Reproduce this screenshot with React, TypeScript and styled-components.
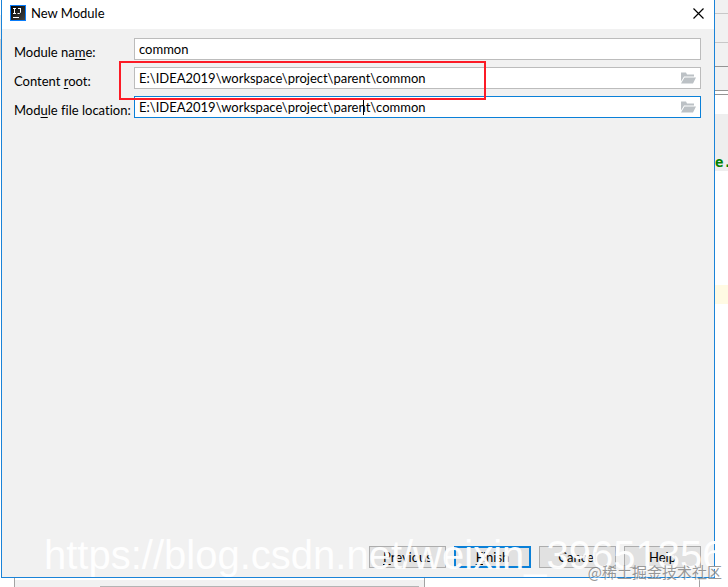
import React from "react";
import styled, { createGlobalStyle } from "styled-components";

const GlobalStyle = createGlobalStyle`
  *, *::before, *::after { box-sizing: border-box; }
  body { margin: 0; overflow: hidden; background: #fff; }
  body, input, button { font-family: Lato, "Noto Sans", sans-serif; font-size: 13px; color: #000; font-variant-ligatures: none; }
  u { text-underline-offset: 2px; text-decoration-thickness: 1px; }
`;

const Desktop = styled.div`
  position: relative;
  display: grid;
  grid-template-columns: 1px minmax(0, 1fr) 13px;
  grid-template-rows: minmax(0, 1fr) 9px;
  height: 100vh;
  overflow: hidden;
`;

const Strip = styled.div`
  display: flex;
  flex-direction: column;
  overflow: hidden;
`;

const Band = styled.div<{ $size: number; $fill: string; $rule?: string }>`
  display: flex;
  align-items: flex-end;
  flex: none;
  height: ${(p) => p.$size}px;
  background: ${(p) => p.$fill};
  border-bottom: ${(p) => (p.$rule ? `1px solid ${p.$rule}` : "0")};
`;

const Code = styled.code`
  font: bold 14px/18px "DejaVu Sans Mono", monospace;
  color: #008000;
`;

const Dialog = styled.section`
  display: flex;
  flex-direction: column;
  background: #f1f1f1;
  border: solid #1a83d8;
  border-width: 0 1px 1px;
`;

const TitleBar = styled.header`
  display: flex;
  align-items: center;
  gap: 5px;
  height: 29px;
  padding: 0 8px 3px;
  background: #fff;
`;

const Logo = styled.svg`
  display: block;
  width: 16px;
  height: 16px;
`;

const Title = styled.h1`
  flex: 1;
  margin: 0;
  font-size: 13px;
  font-weight: 400;
`;

const CloseButton = styled.button`
  display: flex;
  padding: 2px;
  border: 0;
  background: none;
`;

const Form = styled.form`
  display: flex;
  flex: 1;
  flex-direction: column;
  padding: 9px 13px 9px 12px;
`;

const Fields = styled.div`
  position: relative;
  display: flex;
  flex: 1;
  flex-direction: column;
  gap: 7px;
`;

const Row = styled.div`
  display: grid;
  grid-template-columns: 120px minmax(0, 1fr);
`;

const Label = styled.label`
  height: 22px;
  padding-top: 5px;
  line-height: 18px;
  white-space: nowrap;
`;

const Field = styled.div<{ $active?: boolean }>`
  position: relative;
  display: flex;
  align-items: center;
  height: 22px;
  padding-right: 4px;
  background: #fff;
  border: 1px solid ${(p) => (p.$active ? "#0a80d8" : "#bcbcbc")};
`;

const TextInput = styled.input`
  flex: 1;
  min-width: 0;
  height: 20px;
  padding: 0 4px;
  border: 0;
  outline: 0;
  background: none;
`;

const Caret = styled.span`
  position: absolute;
  top: 3px;
  left: 228px;
  width: 1px;
  height: 15px;
  background: #000;
`;

const BrowseButton = styled.button`
  display: flex;
  padding: 0;
  border: 0;
  background: none;
`;

const Highlight = styled.div`
  position: absolute;
  top: 23px;
  left: 105px;
  width: 367px;
  height: 39px;
  border: 2px solid #fc1b26;
  pointer-events: none;
`;

const Actions = styled.footer`
  display: flex;
  justify-content: flex-end;
  gap: 8px;
`;

const ActionButton = styled.button<{ $primary?: boolean }>`
  width: 77px;
  height: 22px;
  padding: 0;
  line-height: 16px;
  background: #e1e1e1;
  border: ${(p) => (p.$primary ? "2px solid #0a80d8" : "1px solid #adadad")};
`;

const Below = styled.div`
  grid-column: 1 / -1;
  display: flex;
  padding: 0 28px 0 14px;
  justify-content: space-between;
`;

const BelowPanel = styled.div`
  display: flex;
  align-items: flex-end;
  width: 411px;
  padding: 0 5px 0 85px;
  background: linear-gradient(#fff 2px, #f1f1f1 2px);
  border: solid #a3a3a3;
  border-width: 0 1px;
`;

const Rule = styled.div`
  flex: 1;
  height: 1px;
  background: #b4b4b4;
`;

const Edge = styled.div`
  width: 1px;
  background: #a3a3a3;
`;

const BlogMark = styled.div`
  position: absolute;
  left: 44px;
  bottom: 8px;
  font: 40px/48px "Liberation Sans", Arial, sans-serif;
  color: rgba(255, 255, 255, 0.95);
  white-space: nowrap;
  pointer-events: none;
`;

const SiteMark = styled.div`
  position: absolute;
  right: 6px;
  bottom: 4px;
  font: 15px/22px "Noto Sans CJK SC", sans-serif;
  color: rgba(125, 125, 125, 0.8);
  text-shadow: 1px 1px 1px rgba(255, 255, 255, 0.7);
  white-space: nowrap;
  pointer-events: none;
`;

const FolderIcon = () => (
  <svg width="16" height="12" viewBox="0 0 16 12" aria-hidden="true">
    <path d="M1 0.500h5l1 2h7v2H4L1 9.500z" fill="#bcc1c5" />
    <path d="M4.500 5.500H16l-3 6H1z" fill="#bcc1c5" />
  </svg>
);

const rightBands: { size: number; fill: string; rule?: string; code?: string }[] = [
  { size: 14, fill: "#f1f1f1", rule: "#c8c8c8" },
  { size: 29, fill: "#f1f1f1", rule: "#c8c8c8" },
  { size: 24, fill: "#f1f1f1", rule: "#949494" },
  { size: 24, fill: "#f1f1f1", rule: "#949494" },
  { size: 4, fill: "#fff", rule: "#949494" },
  { size: 19, fill: "#fff" },
  { size: 57, fill: "#eeeeee", code: "e." },
  { size: 114, fill: "#fff" },
  { size: 19, fill: "#fffae3" },
];

export default function App() {
  return (
    <>
      <GlobalStyle />
      <Desktop>
        <Strip>
          <Band $size={15} $fill="#fff" />
          <Band $size={24} $fill="#eeeeee" />
          <Band $size={21} $fill="#cfcfcf" />
        </Strip>
        <Dialog role="dialog" aria-labelledby="dialog-title">
          <TitleBar>
            <Logo viewBox="0 0 16 16" aria-hidden="true">
              <defs>
                <linearGradient id="tile" x1="0" y1="0" x2="1" y2="1">
                  <stop offset="0" stopColor="#000" />
                  <stop offset="1" stopColor="#454545" />
                </linearGradient>
              </defs>
              <rect x="0.5" y="0.5" width="15" height="15" fill="url(#tile)" stroke="#087cfa" />
              <path d="M3 3.500h3M4.500 3v6M3 8.500h3M8 3.500h3M10.500 3v4.500l-1 1H7.500M3 12.500h6" fill="none" stroke="#fff" />
            </Logo>
            <Title id="dialog-title">New Module</Title>
            <CloseButton type="button" aria-label="Close">
              <svg width="11" height="11" viewBox="0 0 11 11" aria-hidden="true">
                <path d="M0.500 0.500l10 10M10.500 0.500l-10 10" stroke="#000" strokeWidth="1.200" />
              </svg>
            </CloseButton>
          </TitleBar>
          <Form onSubmit={(e) => e.preventDefault()}>
            <Fields>
              <Row>
                <Label htmlFor="name">Module na<u>m</u>e:</Label>
                <Field><TextInput id="name" defaultValue="common" /></Field>
              </Row>
              <Row>
                <Label htmlFor="root">Content <u>r</u>oot:</Label>
                <Field>
                  <TextInput id="root" defaultValue={"E:\\IDEA2019\\workspace\\project\\parent\\common"} />
                  <BrowseButton type="button" aria-label="Browse content root"><FolderIcon /></BrowseButton>
                </Field>
              </Row>
              <Row>
                <Label htmlFor="location">Mod<u>u</u>le file location:</Label>
                <Field $active>
                  <TextInput id="location" defaultValue={"E:\\IDEA2019\\workspace\\project\\parent\\common"} />
                  <Caret />
                  <BrowseButton type="button" aria-label="Browse file location"><FolderIcon /></BrowseButton>
                </Field>
              </Row>
              <Highlight />
            </Fields>
            <Actions>
              <ActionButton type="button"><u>P</u>revious</ActionButton>
              <ActionButton type="submit" $primary><u>F</u>inish</ActionButton>
              <ActionButton type="button">Cancel</ActionButton>
              <ActionButton type="button">Help</ActionButton>
            </Actions>
          </Form>
        </Dialog>
        <Strip>
          {rightBands.map((b, i) => (
            <Band key={i} $size={b.size} $fill={b.fill} $rule={b.rule}>
              {b.code && <Code>{b.code}</Code>}
            </Band>
          ))}
        </Strip>
        <Below>
          <BelowPanel><Rule /></BelowPanel>
          <Edge />
        </Below>
        <BlogMark>https://blog.csdn.net/weixin_39651356</BlogMark>
        <SiteMark>@稀土掘金技术社区</SiteMark>
      </Desktop>
    </>
  );
}
